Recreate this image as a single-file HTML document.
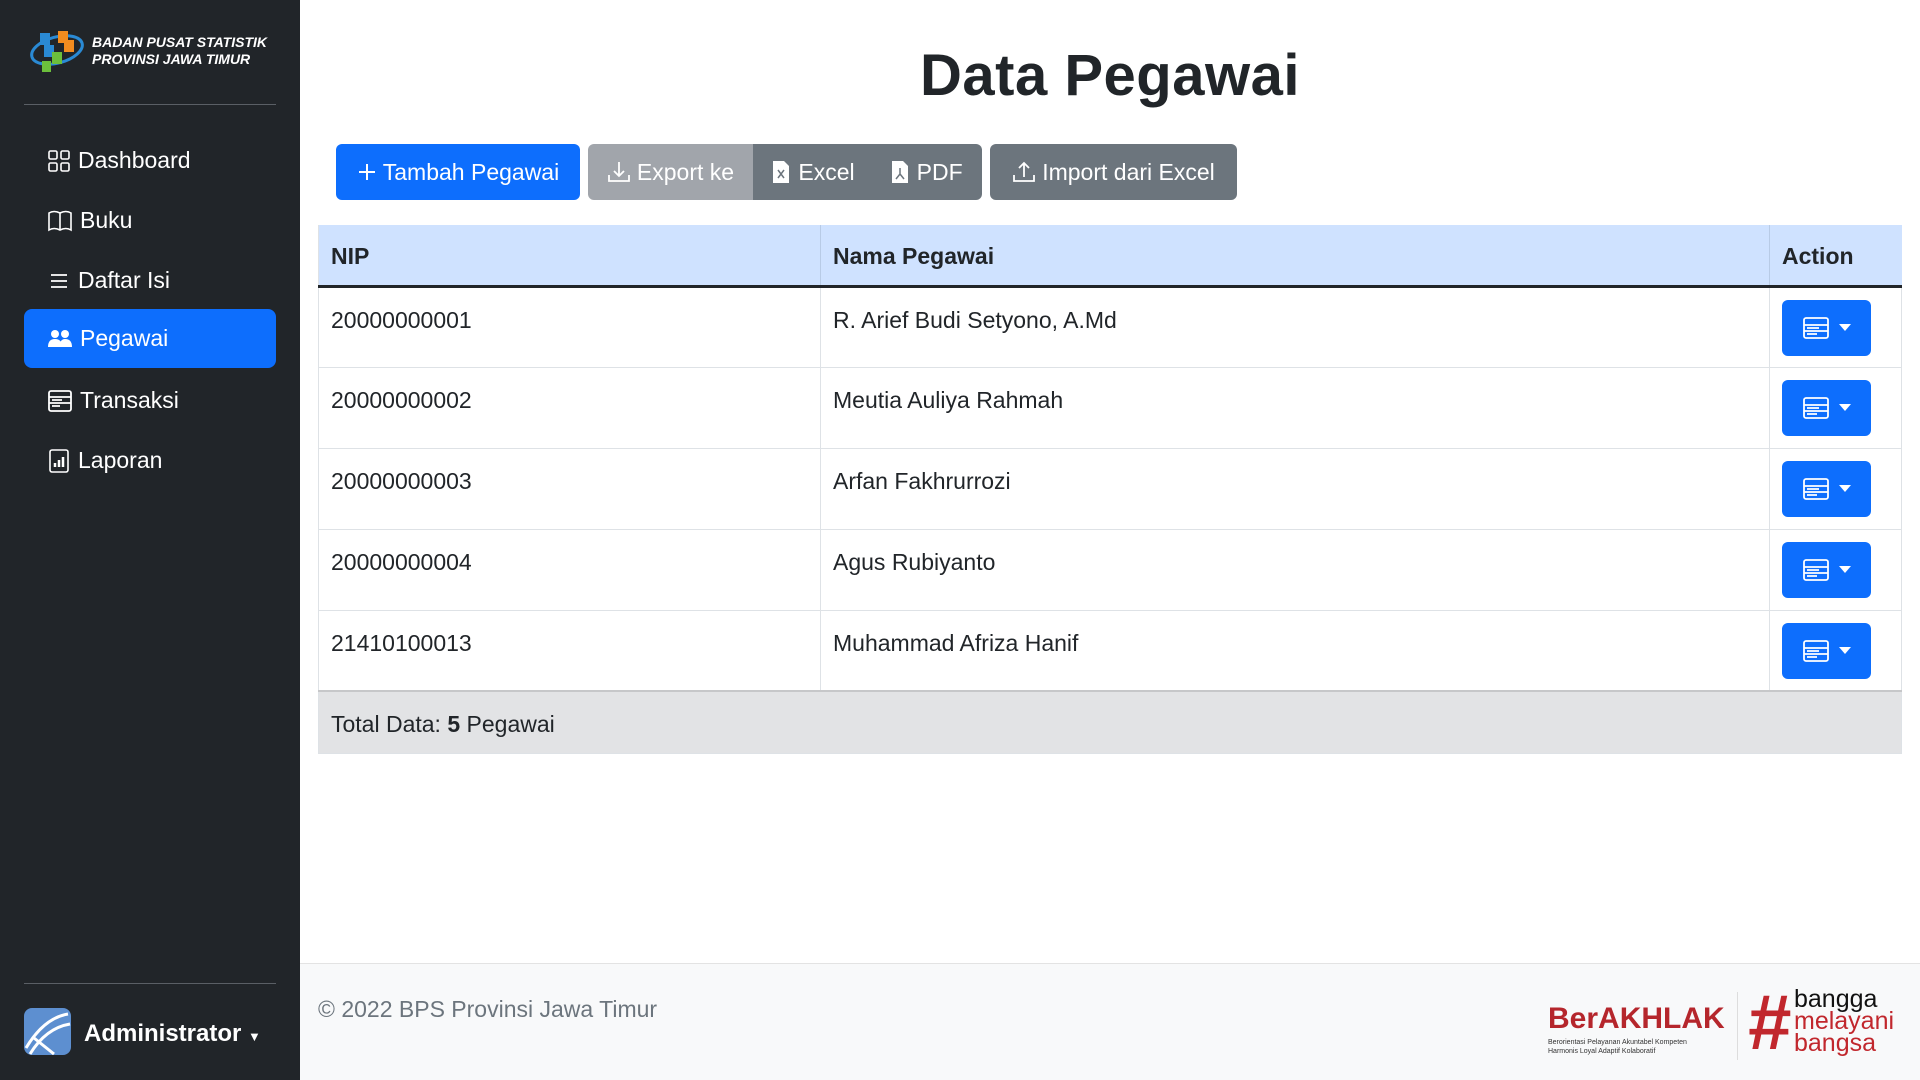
<!DOCTYPE html><html><head><meta charset="utf-8"><style>
*{box-sizing:border-box;margin:0;padding:0}
body{width:1920px;height:1080px;font-family:"Liberation Sans",sans-serif;background:#fff;position:relative;overflow:hidden;color:#212529}
.side{position:absolute;left:0;top:0;width:300px;height:1080px;background:#212529;color:#fff}
.logo{position:absolute;left:28px;top:28px}
.lt{position:absolute;left:92px;top:34px;font-size:14px;font-weight:bold;font-style:italic;line-height:17px;color:#fff}
.hr{position:absolute;left:24px;width:252px;height:1px;background:#5a5f65}
.nav{position:absolute;left:24px;width:252px;height:59px;border-radius:8px;font-size:23px;display:flex;align-items:center;padding-left:24px}
.nav svg{margin-right:8px}
.act{background:#0d6efd}
h1{position:absolute;left:300px;width:1620px;text-align:center;top:42px;font-size:58px;font-weight:bold;letter-spacing:0.5px}
.btn{position:absolute;top:144px;height:56px;color:#fff;font-size:23px;display:flex;align-items:center;justify-content:center;gap:6px}
table{position:absolute;left:318px;top:225px;width:1584px;border-collapse:collapse;font-size:23px}
th{background:#cfe2ff;height:61px;text-align:left;padding:4px 12px 0;border-bottom:3px solid #212529;border-left:1px solid #b8cbe6;font-weight:bold}
td{height:81px;vertical-align:top;padding:19px 12px 0;border-bottom:1px solid #dee2e6;border-left:1px solid #dee2e6}
td:last-child{border-right:1px solid #dee2e6;padding-top:12px}
.ab{width:89px;height:56px;background:#0d6efd;border-radius:6px;display:flex;align-items:center;justify-content:center;gap:10px}
.tot td{background:#e2e3e5;height:62px;vertical-align:middle;padding-top:4px!important;border-top:2px solid #c6c7c9}
.foot{position:absolute;left:300px;top:963px;width:1620px;height:117px;background:#f8f9fa;border-top:1px solid #e3e3e3}
</style></head><body>
<div class="side">
<svg class="logo" width="58" height="48" viewBox="0 0 58 48"><ellipse cx="29" cy="22" rx="26" ry="13" fill="none" stroke="#2a8ad4" stroke-width="3" transform="rotate(-15 29 22)"/><rect x="12" y="5" width="10" height="12" fill="#2a8ad4"/><rect x="30" y="3" width="10" height="12" fill="#f28c1f"/><rect x="36" y="12" width="10" height="12" fill="#f28c1f"/><rect x="16" y="17" width="10" height="12" fill="#2a8ad4"/><rect x="24" y="24" width="10" height="12" fill="#6cbf3c"/><rect x="14" y="33" width="9" height="11" fill="#6cbf3c"/></svg>
<div class="lt">BADAN PUSAT STATISTIK<br>PROVINSI JAWA TIMUR</div>
<div class="hr" style="top:104px"></div>
<div class="nav" style="top:131px"><svg width="22" height="22" viewBox="0 0 22 22" fill="none" stroke="#fff" stroke-width="1.6"><rect x="1" y="1" width="8" height="8" rx="1.5"/><rect x="13" y="1" width="8" height="8" rx="1.5"/><rect x="1" y="13" width="8" height="8" rx="1.5"/><rect x="13" y="13" width="8" height="8" rx="1.5"/></svg>Dashboard</div>
<div class="nav" style="top:191px"><svg width="24" height="22" viewBox="0 0 24 22" fill="none" stroke="#fff" stroke-width="1.6"><path d="M1 3Q6 0 12 3Q18 0 23 3V20Q18 17 12 20Q6 17 1 20Z M12 3V20"/></svg>Buku</div>
<div class="nav" style="top:251px"><svg width="22" height="22" viewBox="0 0 22 22" stroke="#fff" stroke-width="1.8"><path d="M3 5H19M3 11H19M3 17H19"/></svg>Daftar Isi</div>
<div class="nav act" style="top:309px"><svg width="24" height="20" viewBox="0 0 24 20" fill="#fff"><circle cx="7" cy="5" r="4"/><circle cx="17" cy="5" r="4"/><path d="M0 18Q0 10 7 10Q14 10 14 18Z M11 18Q12 10 17 10Q24 10 24 18Z"/></svg>Pegawai</div>
<div class="nav" style="top:371px"><svg width="24" height="22" viewBox="0 0 24 22" fill="none" stroke="#fff" stroke-width="1.8"><rect x="1" y="1" width="22" height="20" rx="2"/><path d="M1 7H23M1 13H23M4 10H14M4 16H12" /></svg>Transaksi</div>
<div class="nav" style="top:431px"><svg width="22" height="24" viewBox="0 0 22 24" fill="none" stroke="#fff" stroke-width="1.6"><rect x="2" y="1" width="18" height="22" rx="2"/><path d="M7 18V14M11 18V11M15 18V8" stroke-width="2.5"/></svg>Laporan</div>
<div class="hr" style="top:983px"></div>
<svg style="position:absolute;left:24px;top:1008px" width="47" height="47" viewBox="0 0 47 47"><rect width="47" height="47" rx="8" fill="#5d8fd0"/><path d="M2 40Q20 10 44 6M6 46Q22 20 46 16M10 30L30 46" stroke="#fff" stroke-width="3" fill="none"/></svg>
<div style="position:absolute;left:84px;top:1020px;font-size:24px;font-weight:bold">Administrator <span style="font-size:13px">▼</span></div>
</div>
<h1>Data Pegawai</h1>
<div class="btn" style="left:336px;width:244px;background:#0d6efd;border-radius:6px"><svg width="20" height="20" viewBox="0 0 20 20" stroke="#fff" stroke-width="2"><path d="M10 2V18M2 10H18"/></svg> Tambah Pegawai</div>
<div class="btn" style="left:588px;width:165px;background:#a1a5ab;border-radius:6px 0 0 6px"><svg width="24" height="24" viewBox="0 0 24 24" fill="none" stroke="#fff" stroke-width="1.8"><path d="M2 15V21H22V15M12 2V16M7 11L12 16L17 11"/></svg>Export ke</div>
<div class="btn" style="left:753px;width:229px;background:#6c757d;border-radius:0 6px 6px 0;gap:36px"><span style="display:flex;align-items:center;gap:8px"><svg width="18" height="24" viewBox="0 0 18 24"><path d="M1 1H12L17 6V23H1Z" fill="#fff"/><path d="M6 10L12 18M12 10L6 18" stroke="#6c757d" stroke-width="1.5"/></svg>Excel</span><span style="display:flex;align-items:center;gap:8px"><svg width="18" height="24" viewBox="0 0 18 24"><path d="M1 1H12L17 6V23H1Z" fill="#fff"/><path d="M9 8V14L5 19M9 14L13 19" stroke="#6c757d" stroke-width="1.5" fill="none"/></svg>PDF</span></div>
<div class="btn" style="left:990px;width:247px;background:#6c757d;border-radius:6px"><svg width="24" height="24" viewBox="0 0 24 24" fill="none" stroke="#fff" stroke-width="1.8"><path d="M2 15V21H22V15M12 17V3M7 8L12 3L17 8"/></svg>Import dari Excel</div>
<table>
<tr><th style="width:502px;border-left:1px solid #dee2e6">NIP</th><th style="width:949px">Nama Pegawai</th><th>Action</th></tr>
<tr><td>20000000001</td><td>R. Arief Budi Setyono, A.Md</td><td><div class="ab"><svg width="26" height="22" viewBox="0 0 26 22" fill="none" stroke="#fff" stroke-width="1.8"><rect x="1" y="1" width="24" height="20" rx="2"/><path d="M1 8H25M1 14H25M4 11H16M4 17H14"/></svg><svg width="12" height="8" viewBox="0 0 12 8"><path d="M0 0H12L6 7Z" fill="#fff"/></svg></div></td></tr>
<tr><td>20000000002</td><td>Meutia Auliya Rahmah</td><td><div class="ab"><svg width="26" height="22" viewBox="0 0 26 22" fill="none" stroke="#fff" stroke-width="1.8"><rect x="1" y="1" width="24" height="20" rx="2"/><path d="M1 8H25M1 14H25M4 11H16M4 17H14"/></svg><svg width="12" height="8" viewBox="0 0 12 8"><path d="M0 0H12L6 7Z" fill="#fff"/></svg></div></td></tr>
<tr><td>20000000003</td><td>Arfan Fakhrurrozi</td><td><div class="ab"><svg width="26" height="22" viewBox="0 0 26 22" fill="none" stroke="#fff" stroke-width="1.8"><rect x="1" y="1" width="24" height="20" rx="2"/><path d="M1 8H25M1 14H25M4 11H16M4 17H14"/></svg><svg width="12" height="8" viewBox="0 0 12 8"><path d="M0 0H12L6 7Z" fill="#fff"/></svg></div></td></tr>
<tr><td>20000000004</td><td>Agus Rubiyanto</td><td><div class="ab"><svg width="26" height="22" viewBox="0 0 26 22" fill="none" stroke="#fff" stroke-width="1.8"><rect x="1" y="1" width="24" height="20" rx="2"/><path d="M1 8H25M1 14H25M4 11H16M4 17H14"/></svg><svg width="12" height="8" viewBox="0 0 12 8"><path d="M0 0H12L6 7Z" fill="#fff"/></svg></div></td></tr>
<tr><td>21410100013</td><td>Muhammad Afriza Hanif</td><td><div class="ab"><svg width="26" height="22" viewBox="0 0 26 22" fill="none" stroke="#fff" stroke-width="1.8"><rect x="1" y="1" width="24" height="20" rx="2"/><path d="M1 8H25M1 14H25M4 11H16M4 17H14"/></svg><svg width="12" height="8" viewBox="0 0 12 8"><path d="M0 0H12L6 7Z" fill="#fff"/></svg></div></td></tr>
<tr class="tot"><td colspan="3" style="border-right:1px solid #dee2e6">Total Data: <b>5</b> Pegawai</td></tr>
</table>
<div class="foot">
<div style="position:absolute;left:18px;top:32px;font-size:23px;color:#6c757d">© 2022 BPS Provinsi Jawa Timur</div>
<div style="position:absolute;left:1248px;top:38px;font-size:30px;font-weight:bold;color:#b5262c">BerAKHLAK</div>
<div style="position:absolute;left:1248px;top:74px;font-size:7px;color:#333;line-height:9px">Berorientasi Pelayanan Akuntabel Kompeten<br>Harmonis Loyal Adaptif Kolaboratif</div>
<div style="position:absolute;left:1437px;top:28px;width:1px;height:68px;background:#ddd"></div>
<div style="position:absolute;left:1447px;top:18px;font-size:78px;font-weight:bold;color:#c1272d;font-style:italic;line-height:80px">#</div>
<div style="position:absolute;left:1494px;top:24px;font-size:25px;line-height:22px;color:#c1272d;font-weight:500"><span style="color:#111">bangga</span><br>melayani<br>bangsa</div>
</div>
</body></html>
